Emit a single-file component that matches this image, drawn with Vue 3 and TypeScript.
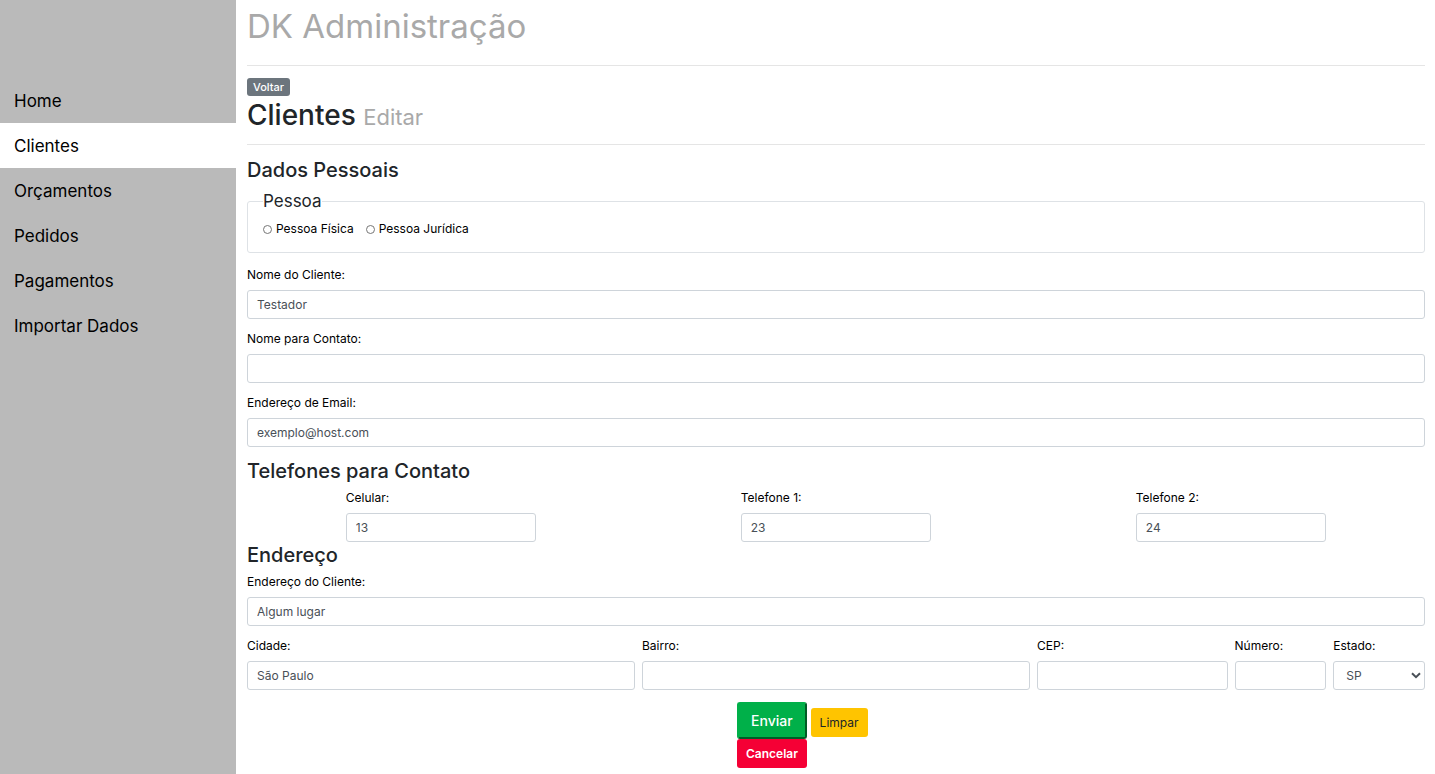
<script setup lang="ts">
import { reactive, ref } from 'vue'

interface MenuItem {
  label: string
  active?: boolean
}

const menu: MenuItem[] = [
  { label: 'Home' },
  { label: 'Clientes', active: true },
  { label: 'Orçamentos' },
  { label: 'Pedidos' },
  { label: 'Pagamentos' },
  { label: 'Importar Dados' },
]

const emptyForm = () => ({
  nome: '',
  contato: '',
  email: '',
  celular: '',
  telefone1: '',
  telefone2: '',
  endereco: '',
  cidade: '',
  bairro: '',
  cep: '',
  numero: '',
  estado: 'SP',
})

const form = reactive({
  ...emptyForm(),
  nome: 'Testador',
  email: 'exemplo@host.com',
  celular: '13',
  telefone1: '23',
  telefone2: '24',
  endereco: 'Algum lugar',
  cidade: 'São Paulo',
})
const pessoa = ref('')
const estados = ['SP', 'RJ', 'MG', 'ES', 'PR', 'SC', 'RS', 'BA']

function limpar() {
  Object.assign(form, emptyForm())
  pessoa.value = ''
}
</script>

<template>
  <div class="layout">
    <nav class="sidebar">
      <a
        v-for="item in menu"
        :key="item.label"
        href="#"
        class="menu-link"
        :class="{ active: item.active }"
      >{{ item.label }}</a>
    </nav>

    <main class="content">
      <h1 class="brand">DK Administração</h1>
      <hr class="rule" />
      <a href="#" class="back">Voltar</a>
      <h2 class="page-title">Clientes <small>Editar</small></h2>
      <hr class="rule" />

      <form @submit.prevent>
        <h3 class="section">Dados Pessoais</h3>
        <fieldset class="person">
          <legend>Pessoa</legend>
          <div class="radios">
            <label class="radio"><input v-model="pessoa" type="radio" name="pessoa" value="fisica" />Pessoa Física</label>
            <label class="radio"><input v-model="pessoa" type="radio" name="pessoa" value="juridica" />Pessoa Jurídica</label>
          </div>
        </fieldset>

        <div class="group">
          <label for="nome">Nome do Cliente:</label>
          <input id="nome" v-model="form.nome" class="control" type="text" />
        </div>
        <div class="group">
          <label for="contato">Nome para Contato:</label>
          <input id="contato" v-model="form.contato" class="control" type="text" />
        </div>
        <div class="group">
          <label for="email">Endereço de Email:</label>
          <input id="email" v-model="form.email" class="control" type="email" />
        </div>

        <h3 class="section">Telefones para Contato</h3>
        <div class="grid">
          <div class="phone phone-a">
            <label for="celular">Celular:</label>
            <input id="celular" v-model="form.celular" class="control" type="text" />
          </div>
          <div class="phone phone-b">
            <label for="telefone1">Telefone 1:</label>
            <input id="telefone1" v-model="form.telefone1" class="control" type="text" />
          </div>
          <div class="phone phone-c">
            <label for="telefone2">Telefone 2:</label>
            <input id="telefone2" v-model="form.telefone2" class="control" type="text" />
          </div>
        </div>

        <h3 class="section">Endereço</h3>
        <div class="group">
          <label for="endereco">Endereço do Cliente:</label>
          <input id="endereco" v-model="form.endereco" class="control" type="text" />
        </div>
        <div class="grid">
          <div class="span-4">
            <label for="cidade">Cidade:</label>
            <input id="cidade" v-model="form.cidade" class="control" type="text" />
          </div>
          <div class="span-4">
            <label for="bairro">Bairro:</label>
            <input id="bairro" v-model="form.bairro" class="control" type="text" />
          </div>
          <div class="span-2">
            <label for="cep">CEP:</label>
            <input id="cep" v-model="form.cep" class="control" type="text" />
          </div>
          <div>
            <label for="numero">Número:</label>
            <input id="numero" v-model="form.numero" class="control" type="text" />
          </div>
          <div>
            <label for="estado">Estado:</label>
            <div class="select-wrap">
              <select id="estado" v-model="form.estado" class="control">
                <option v-for="uf in estados" :key="uf">{{ uf }}</option>
              </select>
              <svg class="chevron" viewBox="0 0 10 7" aria-hidden="true">
                <path d="M1 1.2 5 5.2 9 1.2" fill="none" stroke="#495057" stroke-width="2" />
              </svg>
            </div>
          </div>
        </div>

        <div class="actions">
          <div class="buttons">
            <div class="button-row">
              <button type="submit" class="btn send">Enviar</button>
              <button type="button" class="btn clear" @click="limpar">Limpar</button>
            </div>
            <button type="button" class="btn cancel">Cancelar</button>
          </div>
        </div>
      </form>
    </main>
  </div>
</template>

<style>
body {
  margin: 0;
  background: #fff;
}
</style>

<style scoped>
.layout,
.layout * {
  box-sizing: border-box;
}
.layout {
  display: flex;
  min-height: 100vh;
  font-family: Inter, "Liberation Sans", sans-serif;
  font-size: 12px;
  line-height: 18px;
  color: #212529;
}
.sidebar {
  flex: 0 0 236px;
  padding-top: 78px;
  background: #bababa;
}
.menu-link {
  display: block;
  padding: 10px 14px 8px;
  font-size: 17px;
  line-height: 27px;
  color: #000;
  text-decoration: none;
}
.menu-link.active {
  background: #fff;
}
.content {
  flex: 1;
  min-width: 0;
  padding: 5px 10px 6px 11px;
}
h1, h2, h3 {
  margin: 0;
}
.brand {
  font-size: 33px;
  line-height: 43px;
  font-weight: 400;
  color: #a9a9a9;
  margin-bottom: 17px;
}
.rule {
  height: 1px;
  margin: 0 0 12px;
  border: 0;
  background: #e5e5e5;
}
.back {
  display: block;
  width: fit-content;
  padding: 0 6px;
  border-radius: 3px;
  background: #6c757d;
  color: #fff;
  font-size: 11px;
  font-weight: 500;
  text-decoration: none;
}
.page-title {
  font-size: 28px;
  line-height: 38px;
  font-weight: 500;
  margin-bottom: 10px;
}
.page-title small {
  font-size: 22px;
  line-height: 22px;
  font-weight: 400;
  color: #a9a9a9;
}
.section {
  font-size: 20px;
  line-height: 26px;
  font-weight: 500;
  margin-bottom: 5px;
}
.person {
  min-width: 0;
  margin: 0 0 13px;
  padding: 6px 15px 14px;
  border: 1px solid #dee2e6;
  border-radius: 3px;
}
.person legend {
  padding: 0;
  font-size: 17px;
  line-height: 26px;
}
.radios {
  display: flex;
  gap: 12px;
}
label {
  display: block;
  margin-bottom: 6px;
  color: #000;
}
.radio {
  display: flex;
  align-items: center;
  gap: 4px;
  margin: 0;
}
.radio input {
  appearance: none;
  width: 9px;
  height: 9px;
  margin: 0;
  border: 1px solid #767676;
  border-radius: 50%;
  background: #fff;
}
.radio input:checked {
  box-shadow: inset 0 0 0 2px #fff;
  background: #0075ff;
}
.group {
  margin-bottom: 11px;
}
.control {
  display: block;
  width: 100%;
  height: 29px;
  margin: 0;
  padding: 4px 9px;
  border: 1px solid #ced4da;
  border-radius: 3px;
  background: #fff;
  color: #495057;
  font: inherit;
}
.grid {
  display: grid;
  grid-template-columns: repeat(12, minmax(0, 1fr));
  column-gap: 7px;
}
.span-4 {
  grid-column: span 4;
}
.span-2 {
  grid-column: span 2;
}
.phone-a {
  grid-column: 2 / span 2;
}
.phone-b {
  grid-column: 6 / span 2;
}
.phone-c {
  grid-column: 10 / span 2;
}
.select-wrap {
  position: relative;
}
.select-wrap .control {
  appearance: none;
  padding-left: 12px;
}
.chevron {
  position: absolute;
  right: 4px;
  top: 11px;
  width: 10px;
  height: 7px;
  pointer-events: none;
}
.actions {
  display: flex;
  justify-content: center;
  margin-top: 12px;
}
.buttons {
  width: 198px;
}
.button-row {
  display: flex;
  align-items: flex-end;
  gap: 4px;
}
.btn {
  border: 0;
  border-radius: 3px;
  padding: 5px 9px;
  font: inherit;
  line-height: 19px;
}
.btn.send {
  padding: 7px 12px;
  border: 2px outset #00b049;
  background: #00b049;
  color: #fff;
  font-size: 14px;
  font-weight: 500;
}
.btn.clear {
  margin-bottom: 2px;
  background: #ffc400;
  color: #212529;
}
.btn.cancel {
  display: block;
  background: #f50035;
  color: #fff;
  font-weight: 600;
}
</style>
